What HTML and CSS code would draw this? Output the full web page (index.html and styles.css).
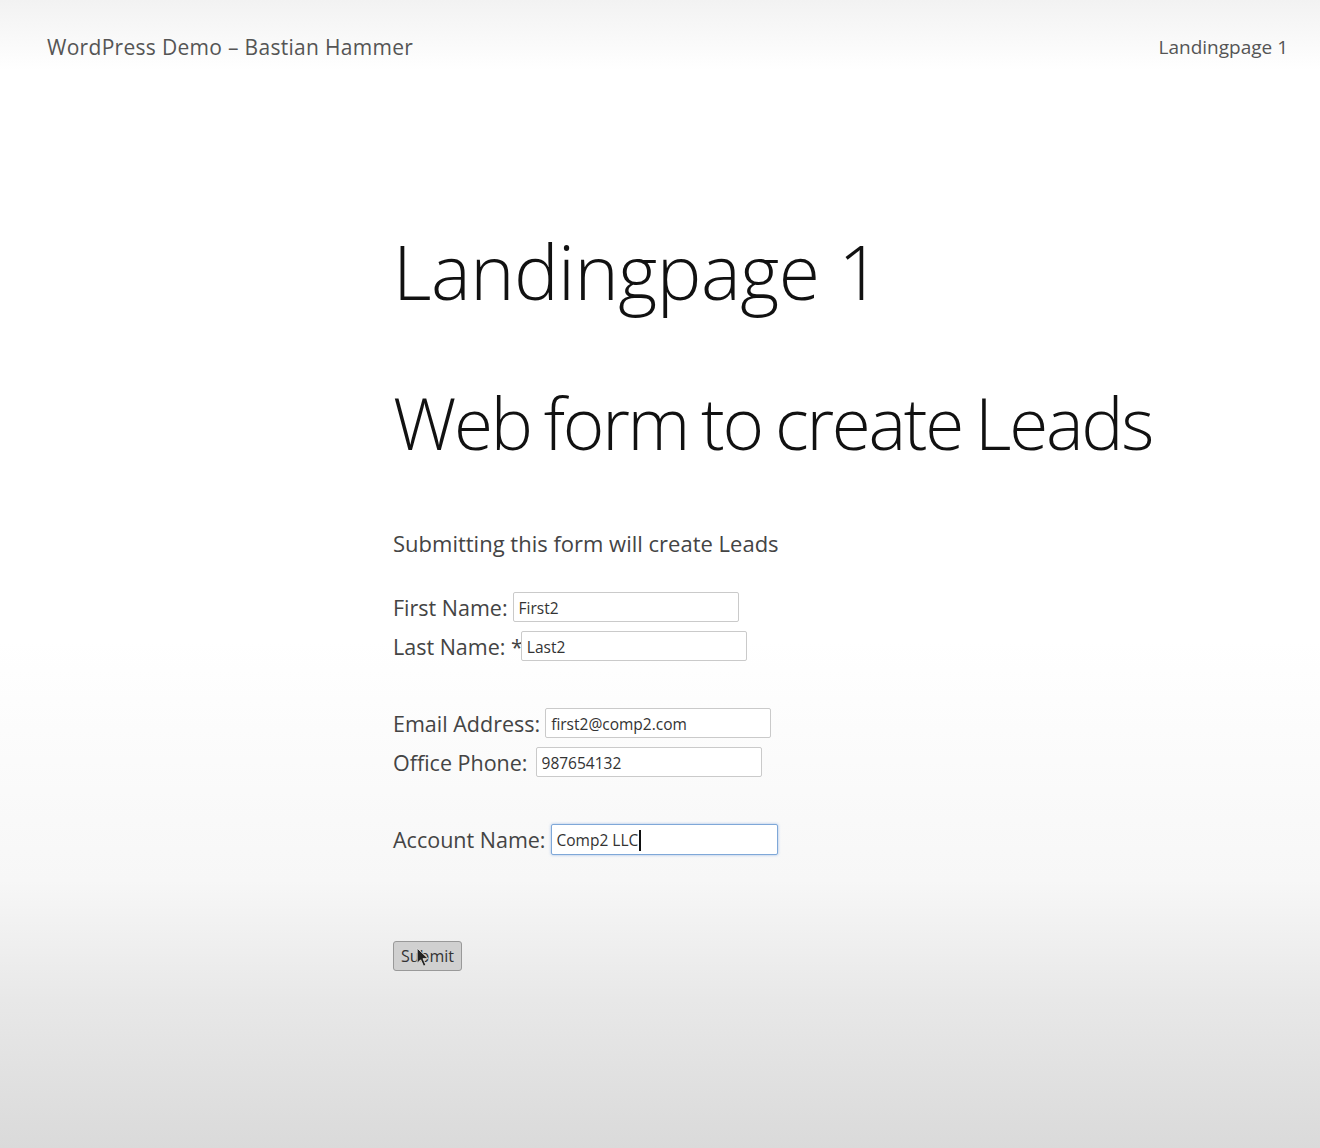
FILE: index.html
```html
<!DOCTYPE html>
<html lang="en">
<head>
<meta charset="utf-8">
<title>Landingpage 1 – WordPress Demo</title>
<link rel="stylesheet" href="styles.css">
</head>
<body>
<header class="site-header">
  <div class="site-title">WordPress Demo – Bastian Hammer</div>
  <nav class="site-nav">Landingpage 1</nav>
</header>
<main class="content">
  <h1 class="page-title">Landingpage 1</h1>
  <h2 class="form-title">Web form to create Leads</h2>
  <p class="intro">Submitting this form will create Leads</p>
  <form class="lead-form">
    <div class="group">
      <div class="row"><label>First Name:</label><input class="field" type="text" value="First2"></div>
      <div class="row"><label class="tight">Last Name: *</label><input class="field" type="text" value="Last2"></div>
    </div>
    <div class="group">
      <div class="row"><label>Email Address:</label><input class="field" type="text" value="first2@comp2.com"></div>
      <div class="row"><label class="wide">Office Phone:</label><input class="field" type="text" value="987654132"></div>
    </div>
    <div class="group">
      <div class="row"><label>Account Name:</label><span class="field focused">Comp2 LLC<span class="caret"></span></span></div>
    </div>
    <div class="actions">
      <button type="button" class="submit">Submit</button>
      <svg class="cursor" width="14" height="21" viewBox="0 0 12 18"><path d="M1 1 L1 14 L4 11 L6.5 16.5 L8.5 15.5 L6 10 L10.5 10 Z" fill="#222" stroke="#ddd" stroke-width="0.8"/></svg>
    </div>
  </form>
</main>
</body>
</html>
```
FILE: styles.css
```css
html, body {
  margin: 0;
  padding: 0;
}
body {
  width: 1320px;
  height: 1148px;
  overflow: hidden;
  font-family: "Open Sans", "Noto Sans", sans-serif;
  color: #333;
  background: linear-gradient(to bottom, #f2f2f2 0px, #ffffff 70px, #ffffff 640px, #f7f7f7 880px, #e8e8e8 1000px, #dadada 1148px);
}
.site-header {
  display: flex;
  justify-content: space-between;
  align-items: center;
  padding: 30px 32px 0 47px;
  height: 34px;
}
.site-title {
  font-size: 21px;
  color: #555;
  letter-spacing: 0.3px;
}
.site-nav {
  font-size: 19px;
  color: #555;
}
.content {
  padding-left: 393px;
}
.page-title, .form-title {
  font-weight: 300;
  color: #111;
  margin: 0;
  line-height: 1;
}
.page-title {
  font-size: 75px;
  margin-top: 170px;
  letter-spacing: -0.5px;
}
.form-title {
  font-size: 71px;
  margin-top: 78px;
  letter-spacing: -2.3px;
  word-spacing: -3px;
}
.intro {
  margin: 70px 0 0;
  font-size: 22px;
  color: #444;
  line-height: 30px;
}
.lead-form {
  margin-top: 34px;
}
.group {
  display: flex;
  flex-direction: column;
  gap: 9px;
  margin-bottom: 47px;
}
.row {
  display: flex;
  align-items: center;
  height: 30px;
}
.row label {
  font-size: 21.5px;
  color: #444;
  margin-right: 5px;
  white-space: pre;
}
.row label.tight {
  margin-right: -2px;
}
.row label.wide {
  margin-right: 8px;
}
.field {
  box-sizing: border-box;
  width: 226px;
  height: 30px;
  border: 1px solid #cacaca;
  border-radius: 2px;
  background: #fff;
  font-family: "Open Sans", "Noto Sans", sans-serif;
  font-size: 15.5px;
  color: #333;
  padding: 2px 5px 0;
  display: flex;
  align-items: center;
}
.focused {
  width: 227px;
  height: 31px;
  border: 1px solid #7fa8d8;
  box-shadow: 0 0 3px rgba(100, 150, 220, 0.6);
}
.caret {
  display: inline-block;
  width: 1.5px;
  height: 21px;
  background: #111;
  margin-left: 1px;
}
.actions {
  position: relative;
  margin-top: 87px;
}
.submit {
  width: 69px;
  height: 30px;
  border: 1px solid #999;
  border-radius: 3px;
  background: #d0d0d0;
  font-family: "Open Sans", "Noto Sans", sans-serif;
  font-size: 16px;
  color: #333;
  padding: 0;
}
.cursor {
  position: absolute;
  left: 23px;
  top: 6px;
}
```
